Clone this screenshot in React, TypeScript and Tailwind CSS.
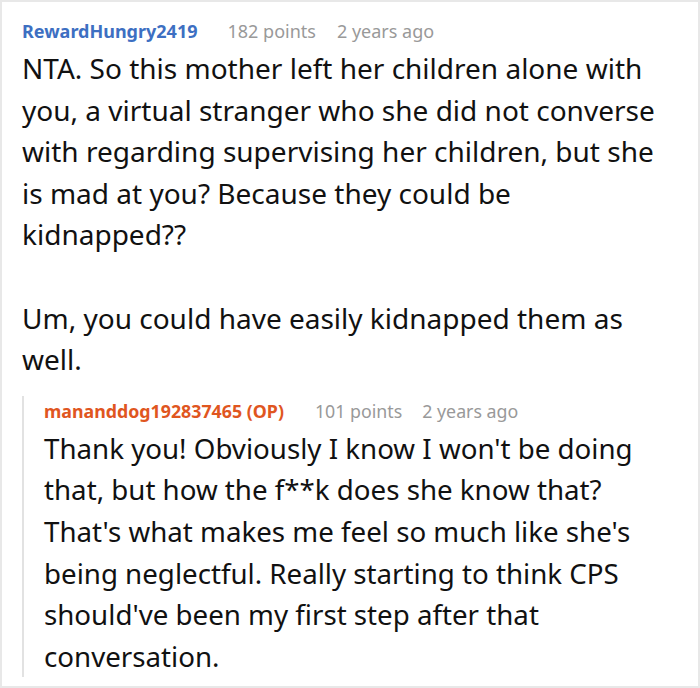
export default function App() {
  return (
    <div
      className="w-[700px] h-[688px] overflow-hidden bg-white border-2 border-[#e8e8e8] text-[#111]"
      style={{ fontFamily: '"Noto Sans", "Open Sans", sans-serif' }}
    >
      <div className="pl-[20px] pr-[16px] pt-[14px] whitespace-nowrap">
        <div className="flex items-baseline gap-[30px] text-[18px] leading-[30px]">
          <span className="font-bold text-[#3d6fc2]">RewardHungry2419</span>
          <div className="flex gap-[21px] text-[#999]">
            <span>182 points</span>
            <span>2 years ago</span>
          </div>
        </div>
        <div className="mt-[2px] text-[28px] leading-[41.6px]">
          <p>
            NTA. So this mother left her children alone with
            <br />
            you, a virtual stranger who she did not converse
            <br />
            with regarding supervising her children, but she
            <br />
            is mad at you? Because they could be
            <br />
            kidnapped??
          </p>
          <p className="mt-[41.6px]">
            Um, you could have easily kidnapped them as
            <br />
            well.
          </p>
        </div>
        <div className="mt-[15px] border-l-2 border-[#e2e2e2] pl-[20px]">
          <div className="flex items-baseline gap-[31px] text-[17.8px] leading-[30px]">
            <span className="font-bold text-[#e0561f]">mananddog192837465 (OP)</span>
            <div className="flex gap-[20px] text-[#999]">
              <span>101 points</span>
              <span>2 years ago</span>
            </div>
          </div>
          <p className="mt-[2px] -mb-[10px] text-[27.7px] leading-[41.6px]">
            Thank you! Obviously I know I won't be doing
            <br />
            that, but how the f**k does she know that?
            <br />
            That's what makes me feel so much like she's
            <br />
            being neglectful. Really starting to think CPS
            <br />
            should've been my first step after that
            <br />
            conversation.
          </p>
        </div>
      </div>
    </div>
  );
}
